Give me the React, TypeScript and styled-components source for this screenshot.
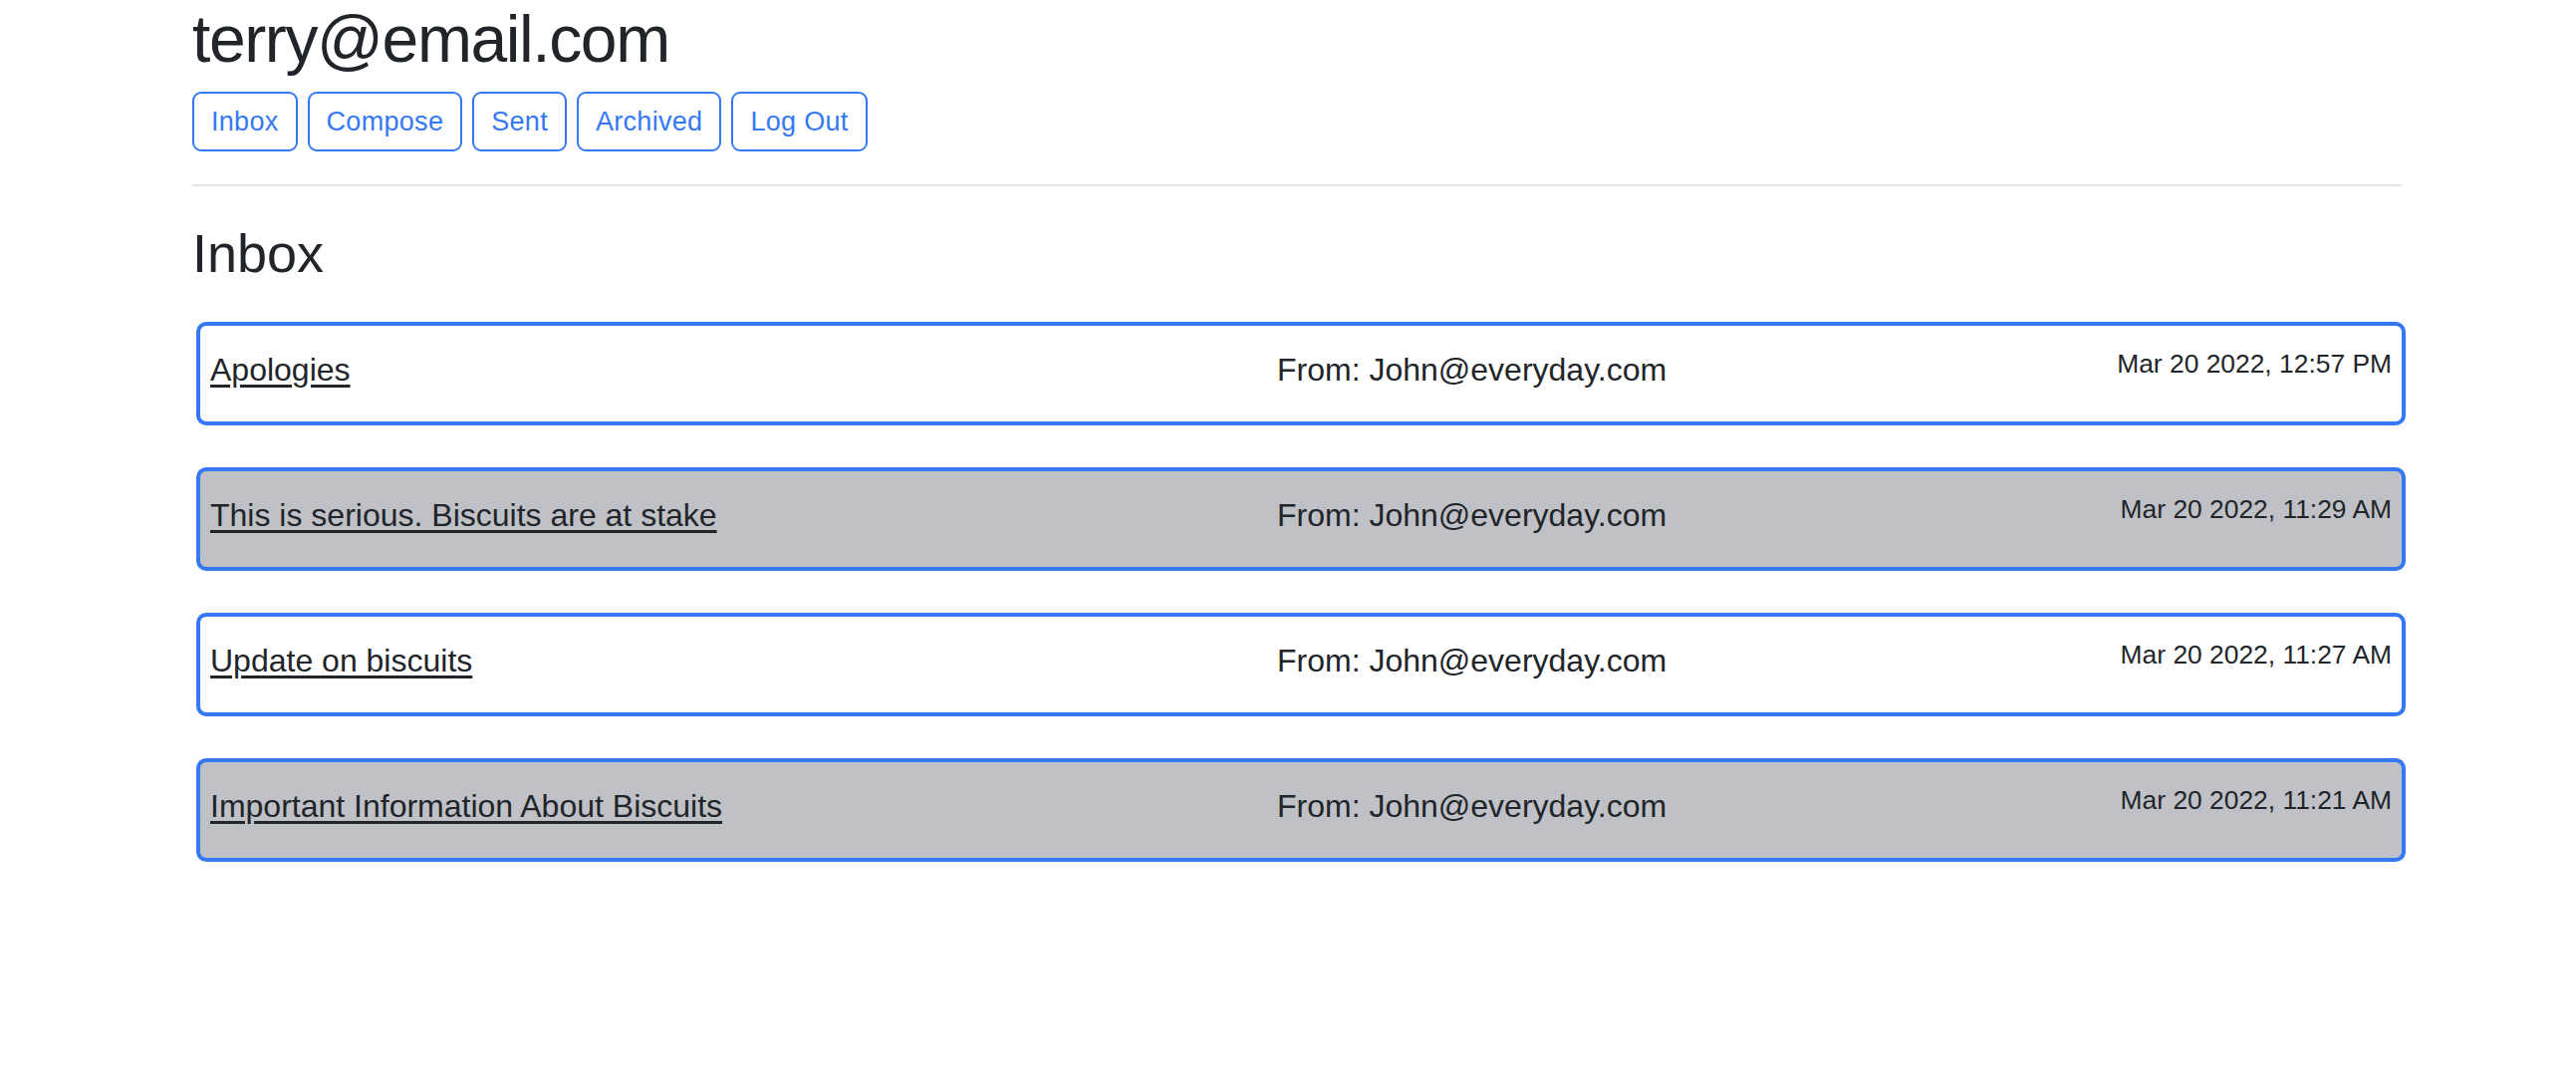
import React from "react";
import styled, { createGlobalStyle } from "styled-components";

const GlobalStyle = createGlobalStyle`
  html, body {
    margin: 0;
    padding: 0;
    background: #ffffff;
  }
  body {
    font-family: "Liberation Sans", Arial, sans-serif;
    color: #212529;
  }
  * { box-sizing: border-box; }
`;

const Page = styled.div`
  width: 2218px;
  margin-left: 193px;
`;

const Title = styled.h1`
  margin: 0 0 13px;
  font-size: 66px;
  line-height: 79px;
  font-weight: 400;
  letter-spacing: -1.4px;
  color: #212529;
`;

const Nav = styled.nav`
  display: flex;
  gap: 10px;
`;

const NavButton = styled.button`
  height: 60px;
  padding: 0 17px;
  border: 2px solid #3479f3;
  border-radius: 9px;
  background: #ffffff;
  color: #3479f3;
  font-family: "Liberation Sans", Arial, sans-serif;
  font-size: 27px;
  letter-spacing: 0.3px;
  line-height: 56px;
  cursor: pointer;
`;

const Divider = styled.hr`
  margin: 33px 0 0;
  border: 0;
  border-top: 2px solid #e4e4e4;
`;

const SectionTitle = styled.h2`
  margin: 35px 0 36px;
  font-size: 54px;
  line-height: 65px;
  font-weight: 400;
  color: #212529;
`;

const List = styled.div`
  display: flex;
  flex-direction: column;
  gap: 42px;
  margin: 0 -4px 0 4px;
`;

const Row = styled.div<{ $read: boolean }>`
  display: grid;
  grid-template-columns: 1071px 1fr auto;
  align-items: start;
  padding: 19px 10px 27px 10px;
  border: 4px solid #3479f3;
  border-radius: 10px;
  background: ${(p) => (p.$read ? "#bfc1c6" : "#ffffff")};
`;

const Subject = styled.a`
  justify-self: start;
  font-size: 32px;
  line-height: 50px;
  color: #212529;
  text-decoration: underline;
  text-underline-offset: 4px;
  cursor: pointer;
`;

const Sender = styled.div`
  font-size: 32px;
  line-height: 50px;
  color: #212529;
`;

const Stamp = styled.div`
  font-size: 26.4px;
  line-height: 39.6px;
  color: #212529;
  text-align: right;
`;

const emails = [
  { subject: "Apologies", from: "John@everyday.com", time: "Mar 20 2022, 12:57 PM", read: false },
  { subject: "This is serious. Biscuits are at stake", from: "John@everyday.com", time: "Mar 20 2022, 11:29 AM", read: true },
  { subject: "Update on biscuits", from: "John@everyday.com", time: "Mar 20 2022, 11:27 AM", read: false },
  { subject: "Important Information About Biscuits", from: "John@everyday.com", time: "Mar 20 2022, 11:21 AM", read: true },
];

export default function App() {
  return (
    <>
      <GlobalStyle />
      <Page>
        <Title>terry@email.com</Title>
        <Nav>
          <NavButton>Inbox</NavButton>
          <NavButton>Compose</NavButton>
          <NavButton>Sent</NavButton>
          <NavButton>Archived</NavButton>
          <NavButton>Log Out</NavButton>
        </Nav>
        <Divider />
        <SectionTitle>Inbox</SectionTitle>
        <List>
          {emails.map((e) => (
            <Row key={e.subject} $read={e.read}>
              <Subject>{e.subject}</Subject>
              <Sender>From: {e.from}</Sender>
              <Stamp>{e.time}</Stamp>
            </Row>
          ))}
        </List>
      </Page>
    </>
  );
}
